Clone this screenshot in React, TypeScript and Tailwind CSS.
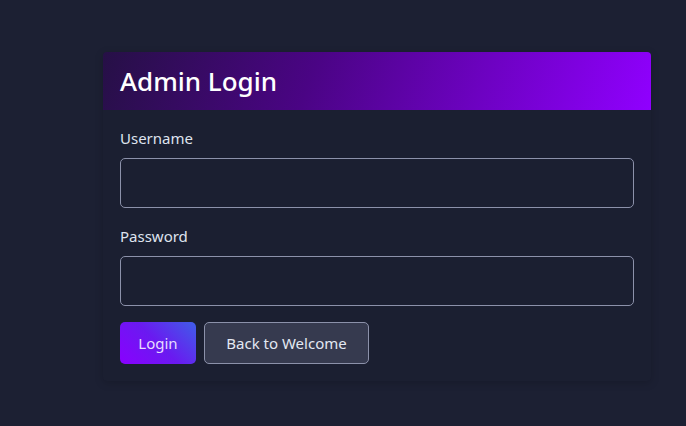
export default function App() {
  return (
    <div
      className="w-[686px] h-[426px] bg-[#1c2033] overflow-hidden pt-[52px] pl-[103px]"
      style={{ fontFamily: '"Noto Sans", "Open Sans", sans-serif' }}
    >
      <div className="w-[548px] bg-[#1b1f31] rounded-[4px] shadow-[0_2px_8px_rgba(0,0,0,0.18)] overflow-hidden">
        <div className="h-[58px] flex items-center px-[17px] bg-[linear-gradient(110deg,#261046_0%,#4a0484_38%,#9000ff_100%)]">
          <h1 className="text-[26px] leading-none text-white font-medium">Admin Login</h1>
        </div>
        <div className="px-[17px] pt-[18px] pb-[17px] flex flex-col">
          <label className="text-[15px] leading-[20px] text-[#dfe3ee]">Username</label>
          <input className="mt-[10px] h-[50px] w-full rounded-[5px] border border-[#8c91aa] bg-transparent outline-none" />
          <label className="mt-[18px] text-[15px] leading-[20px] text-[#dfe3ee]">Password</label>
          <input type="password" className="mt-[10px] h-[50px] w-full rounded-[5px] border border-[#8c91aa] bg-transparent outline-none" />
          <div className="mt-[16px] flex gap-[8px]">
            <button className="w-[76px] h-[42px] rounded-[5px] text-[15px] text-[#e6dcff] bg-[linear-gradient(45deg,#8a00ff_0%,#6a1af0_50%,#3f5ee8_100%)]">
              Login
            </button>
            <button className="w-[165px] h-[42px] rounded-[5px] text-[15px] text-[#e3e8f2] bg-[#363a4f] border border-[#8c91aa]">
              Back to Welcome
            </button>
          </div>
        </div>
      </div>
    </div>
  );
}
